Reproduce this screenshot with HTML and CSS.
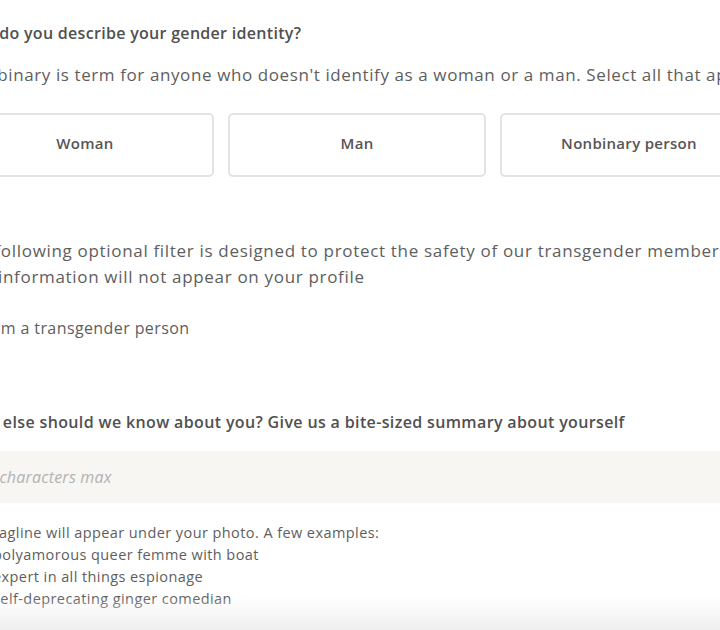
FILE: index.html
```html
<!DOCTYPE html>
<html>
<head>
<meta charset="utf-8">
<link rel="stylesheet" href="styles.css">
</head>
<body>
<div class="page">
  <h2 class="q q-first">How do you describe your gender identity?</h2>
  <p class="sub">Nonbinary is term for anyone who doesn't identify as a woman or a man. Select all that apply.</p>
  <div class="options">
    <button class="opt">Woman</button>
    <button class="opt">Man</button>
    <button class="opt">Nonbinary person</button>
  </div>
  <p class="note">The following optional filter is designed to protect the safety of our transgender members.<br>This information will not appear on your profile</p>
  <label class="check"><span class="box"></span><span>I am a transgender person</span></label>
  <h2 class="q q-second">What else should we know about you? Give us a bite-sized summary about yourself</h2>
  <div class="field"><span class="ph">45 characters max</span></div>
  <div class="help">
    <div>Your tagline will appear under your photo. A few examples:</div>
    <ul class="examples">
      <li>polyamorous queer femme with boat</li>
      <li>expert in all things espionage</li>
      <li>self-deprecating ginger comedian</li>
    </ul>
  </div>
</div>
<div class="fade"></div>
</body>
</html>
```
FILE: styles.css
```css
html, body {
  margin: 0;
  padding: 0;
  background: #fff;
  overflow: hidden;
  width: 720px;
  height: 630px;
}
body {
  font-family: "Open Sans", Lato, sans-serif;
  color: #5e5e5e;
  white-space: nowrap;
}
.page {
  margin-left: -44px;
  width: 1100px;
  padding-top: 23px;
  display: flex;
  flex-direction: column;
  align-items: flex-start;
}
.q {
  margin: 0;
  font-size: 16px;
  line-height: 20px;
  font-weight: 600;
  color: #505050;
  letter-spacing: 0.3px;
}
.q-first {
  margin-left: 3px;
}
.sub {
  margin: 20px 0 0 6px;
  font-size: 17px;
  line-height: 24px;
  letter-spacing: 0.6px;
}
.options {
  margin-top: 26px;
  display: flex;
  gap: 14px;
}
.opt {
  width: 258px;
  height: 64px;
  box-sizing: border-box;
  border: 2px solid #e3e3e3;
  border-radius: 5px;
  background: #fff;
  font-family: "Open Sans", Lato, sans-serif;
  font-size: 15px;
  font-weight: 600;
  color: #555;
  padding: 0 0 4px 0;
  letter-spacing: 0.3px;
}
.note {
  margin: 61px 0 0 2px;
  font-size: 17px;
  line-height: 26px;
  letter-spacing: 0.68px;
}
.check {
  margin-top: 28px;
  display: flex;
  align-items: center;
  gap: 8px;
  font-size: 16px;
  line-height: 20px;
  letter-spacing: 0.4px;
}
.box {
  width: 16px;
  height: 16px;
  border: 1px solid #ccc;
  border-radius: 3px;
}
.q-second {
  margin-top: 74px;
  margin-left: 0;
  letter-spacing: 0.36px;
}
.field {
  margin-top: 19px;
  width: 100%;
  height: 52px;
  background: #f7f6f3;
  display: flex;
  align-items: center;
  padding-left: 21px;
  box-sizing: border-box;
}
.ph {
  font-size: 16px;
  font-style: italic;
  color: #b2b2b2;
  letter-spacing: 0.2px;
}
.help {
  margin-top: 19px;
  font-size: 14.5px;
  line-height: 22px;
  letter-spacing: 0.42px;
}
.examples {
  margin: 0;
  padding: 0 0 0 37px;
  list-style: none;
}
.fade {
  position: fixed;
  left: 0;
  right: 0;
  bottom: 0;
  height: 34px;
  background: linear-gradient(to bottom, rgba(240,240,240,0), #efefef);
  pointer-events: none;
}
```
